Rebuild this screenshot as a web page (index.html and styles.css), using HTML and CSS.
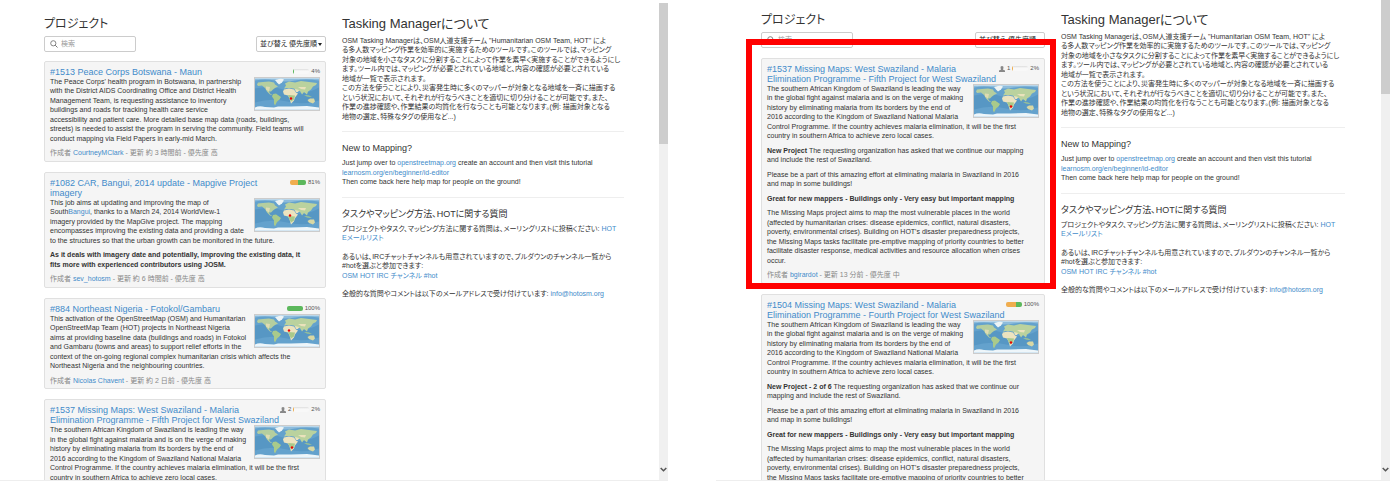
FILE: index.html
```
<!DOCTYPE html>
<html lang="ja">
<head>
<meta charset="utf-8">
<title>Tasking Manager</title>
<link rel="stylesheet" href="styles.css">
</head>
<body>
<svg class="defs" aria-hidden="true">
  <symbol id="world" viewBox="0 0 64 31">
    <rect width="64" height="31" fill="#64a2cd"/>
    <path d="M0 10Q16 6 32 12T64 9V22Q48 27 32 23T0 24Z" fill="#5797c4"/>
    <path d="M0 0H64V2Q50 0 40 2T20 2 0 2Z" fill="#8dbcdc"/>
    <path d="M2 6L3 4 8 3.500 14 3 19 4 20 6 23 8 20 9.500 18 11 16 13 14 13 15 15 18 17 15 16 12 13 10 9.500 7 7 3 7.500Z" fill="#b5ce9f"/>
    <path d="M11 8L15 8.500 14 13 11 11Z" fill="#dfdcb2"/>
    <path d="M20 1.500L26 0 29 1 27 4 24 6 22 4Z" fill="#eef4f5"/>
    <path d="M18 15.500L21 15 26 18.500 24.500 21 22 23 20 27 19 25 19 21 17 18Z" fill="#a9ca8b"/>
    <path d="M29 10L31 7 30 5 34 3 40 4 46 2.500 54 3.500 62 4.500 61 6.500 58 8 56 11 53 13 52 16 49 13.500 47 16 45 12.500 41 12.500 39 10 35 9.500 32 9.500Z" fill="#bad29e"/>
    <path d="M29 11L34 10 39 11 41 14 43 15 40 19 39 22 36 25 34.500 20 33 17 29 16 28 13Z" fill="#ece3bf"/>
    <path d="M33 16.500L40 17 39 21 36 23 34.500 20Z" fill="#a9c98a"/>
    <path d="M40 10.500L44 11.500 43 13.500 41 13.500Z M43 8.500L51 8.500 50 11 46 10.500Z" fill="#ebe2bc"/>
    <path d="M49 16.500L52 18 57 18.500 54 17Z" fill="#a9ca8b"/>
    <path d="M52.500 21.500L55 20 59 20 60 23 58 25 54 23.500Z" fill="#d9d8a4"/>
    <path d="M0 29Q4 27 10 28.500L19 29 23 28 36 28 52 27.500 64 29V31H0Z" fill="#eef6fa"/>
  </symbol>
  <symbol id="person" viewBox="0 0 6 6"><path d="M3 0Q4.800 0 4.500 2L3.900 3.400 6 4.500V6H0V4.500L2.100 3.400 1.500 2Q1.200 0 3 0Z" fill="#888"/></symbol>
  <symbol id="lens" viewBox="0 0 8 8"><circle cx="3.300" cy="3.300" r="2.600" fill="none" stroke="#777" stroke-width=".9"/><path d="M5.200 5.200L7.500 7.500" stroke="#777"/></symbol>
  <symbol id="down" viewBox="0 0 7 5"><path d="M.7 1L3.500 3.800 6.300 1" fill="none" stroke="#555" stroke-width="1.500"/></symbol>
</svg>
<main class="screens">
<div class="screen first">
  <div class="columns">
    <section>
      <h1 class="heading">プロジェクト</h1>
      <form class="tools">
        <label class="search"><svg><use href="#lens"/></svg><input type="text" placeholder="検索" aria-label="検索"></label>
        <button type="button" class="sort">並び替え 優先度順<i class="caret"></i></button>
      </form>
      <article class="card">
        <div class="status"><span class="bar"><i class="done" style="width:6%"></i></span>4%</div>
        <h2><a href="#">#1513 Peace Corps Botswana - Maun</a></h2>
        <svg class="map" viewBox="0 0 64 31"><use href="#world"/><circle cx="36" cy="20" r="1.200" fill="#e00"/></svg>
        <p>The Peace Corps' health program in Botswana, in partnership<br>with the District AIDS Coordinating Office and District Health<br>Management Team, is requesting assistance to inventory<br>buildings and roads for tracking health care service<br>accessibility and patient care. More detailed base map data (roads, buildings,<br>streets) is needed to assist the program in serving the community. Field teams will<br>conduct mapping via Field Papers in early-mid March.</p>
        <footer>作成者 <a href="#">CourtneyMClark</a> - 更新 約 3 時間前 - 優先度 高</footer>
      </article>
      <article class="card">
        <div class="status"><span class="bar"><i class="half" style="width:50%"></i><i class="done" style="width:50%"></i></span>81%</div>
        <h2><a href="#">#1082 CAR, Bangui, 2014 update - Mapgive Project<br>imagery</a></h2>
        <svg class="map" viewBox="0 0 64 31"><use href="#world"/><circle cx="35" cy="16" r="1.200" fill="#e00"/></svg>
        <p>This job aims at updating and improving the map of<br>South<a href="#">Bangui</a>, thanks to a March 24, 2014 WorldView-1<br>imagery provided by the MapGive project. The mapping<br>encompasses improving the existing data and providing a date<br>to the structures so that the urban growth can be monitored in the future.</p>
        <p><b>As it deals with imagery date and potentially, improving the existing data, it<br>fits more with experienced contributors using JOSM.</b></p>
        <footer>作成者 <a href="#">sev_hotosm</a> - 更新 約 6 時間前 - 優先度 高</footer>
      </article>
      <article class="card">
        <div class="status"><span class="bar"><i class="done" style="width:100%"></i></span>100%</div>
        <h2><a href="#">#884 Northeast Nigeria - Fotokol/Gambaru</a></h2>
        <svg class="map" viewBox="0 0 64 31"><use href="#world"/><circle cx="34" cy="15" r="1.200" fill="#e00"/></svg>
        <p>This activation of the OpenStreetMap (OSM) and Humanitarian<br>OpenStreetMap Team (HOT) projects in Northeast Nigeria<br>aims at providing baseline data (buildings and roads) in Fotokol<br>and Gambaru (towns and areas) to support relief efforts in the<br>context of the on-going regional complex humanitarian crisis which affects the<br>Northeast Nigeria and the neighbouring countries.</p>
        <footer>作成者 <a href="#">Nicolas Chavent</a> - 更新 約 2 日前 - 優先度 高</footer>
      </article>
      <article class="card">
        <div class="status"><svg><use href="#person"/></svg>2<span class="bar"><i class="half" style="width:6%"></i></span>2%</div>
        <h2><a href="#">#1537 Missing Maps: West Swaziland - Malaria<br>Elimination Programme - Fifth Project for West Swaziland</a></h2>
        <svg class="map" viewBox="0 0 64 31"><use href="#world"/><circle cx="37" cy="21" r="1.200" fill="#e00"/></svg>
        <p>The southern African Kingdom of Swaziland is leading the way<br>in the global fight against malaria and is on the verge of making<br>history by eliminating malaria from its borders by the end of<br>2016 according to the Kingdom of Swaziland National Malaria<br>Control Programme. If the country achieves malaria elimination, it will be the first<br>country in southern Africa to achieve zero local cases.</p>
      </article>
    </section>
    <section class="about">
      <h1 class="heading">Tasking Managerについて</h1>
      <p>OSM Tasking Managerは、OSM人道支援チーム "Humanitarian OSM Team, HOT" によ<br>る多人数マッピング作業を効率的に実施するためのツールです。このツールでは、マッピング<br>対象の地域を小さなタスクに分割することによって作業を素早く実施することができるようにし<br>ます。ツール内では、マッピングが必要とされている地域と、内容の確認が必要とされている<br>地域が一覧で表示されます。<br>この方法を使うことにより、災害発生時に多くのマッパーが対象となる地域を一斉に描画する<br>という状況において、それぞれが行なうべきことを適切に切り分けることが可能です。また、<br>作業の進捗確認や、作業結果の均質化を行なうことも可能となります。(例: 描画対象となる<br>地物の選定、特殊なタグの使用など...)</p>
      <hr>
      <h2>New to Mapping?</h2>
      <p>Just jump over to <a href="#">openstreetmap.org</a> create an account and then visit this tutorial<br><a href="#">learnosm.org/en/beginner/id-editor</a><br>Then come back here help map for people on the ground!</p>
      <hr>
      <h2>タスクやマッピング方法、HOTに関する質問</h2>
      <p>プロジェクトやタスク、マッピング方法に関する質問は、メーリングリストに投稿ください: <a href="#">HOT<br>Eメールリスト</a></p>
      <p>あるいは、IRCチャットチャンネルも用意されていますので、プルダウンのチャンネル一覧から<br>#hotを選ぶと参加できます:<br><a href="#">OSM HOT IRC チャンネル #hot</a></p>
      <p>全般的な質問やコメントは以下のメールアドレスで受け付けています: <a href="#">info@hotosm.org</a></p>
    </section>
  </div>
  <div class="scroll"><div class="thumb"></div><svg><use href="#down"/></svg></div>
</div>
<div class="screen second">
  <div class="columns">
    <section>
      <h1 class="heading">プロジェクト</h1>
      <form class="tools">
        <label class="search"><svg><use href="#lens"/></svg><input type="text" placeholder="検索" aria-label="検索"></label>
        <button type="button" class="sort">並び替え 優先度順<i class="caret"></i></button>
      </form>
      <article class="card marked">
        <div class="status"><svg><use href="#person"/></svg>1<span class="bar"><i class="half" style="width:6%"></i></span>2%</div>
        <h2><a href="#">#1537 Missing Maps: West Swaziland - Malaria<br>Elimination Programme - Fifth Project for West Swaziland</a></h2>
        <svg class="map" viewBox="0 0 64 31"><use href="#world"/><circle cx="37" cy="21" r="1.200" fill="#e00"/></svg>
        <p>The southern African Kingdom of Swaziland is leading the way<br>in the global fight against malaria and is on the verge of making<br>history by eliminating malaria from its borders by the end of<br>2016 according to the Kingdom of Swaziland National Malaria<br>Control Programme. If the country achieves malaria elimination, it will be the first<br>country in southern Africa to achieve zero local cases.</p>
        <p><b>New Project</b> The requesting organization has asked that we continue our mapping<br>and include the rest of Swaziland.</p>
        <p>Please be a part of this amazing effort at eliminating malaria in Swaziland in 2016<br>and map in some buildings!</p>
        <p><b>Great for new mappers - Buildings only - Very easy but important mapping</b></p>
        <p>The Missing Maps project aims to map the most vulnerable places in the world<br>(affected by humanitarian crises: disease epidemics, conflict, natural disasters,<br>poverty, environmental crises). Building on HOT's disaster preparedness projects,<br>the Missing Maps tasks facilitate pre-emptive mapping of priority countries to better<br>facilitate disaster response, medical activities and resource allocation when crises<br>occur.</p>
        <footer>作成者 <a href="#">bgirardot</a> - 更新 13 分前 - 優先度 中</footer>
      </article>
      <article class="card">
        <div class="status"><span class="bar"><i class="half" style="width:62%"></i><i class="done" style="width:38%"></i></span>100%</div>
        <h2><a href="#">#1504 Missing Maps: West Swaziland - Malaria<br>Elimination Programme - Fourth Project for West Swaziland</a></h2>
        <svg class="map" viewBox="0 0 64 31"><use href="#world"/><circle cx="37" cy="21" r="1.200" fill="#e00"/></svg>
        <p>The southern African Kingdom of Swaziland is leading the way<br>in the global fight against malaria and is on the verge of making<br>history by eliminating malaria from its borders by the end of<br>2016 according to the Kingdom of Swaziland National Malaria<br>Control Programme. If the country achieves malaria elimination, it will be the first<br>country in southern Africa to achieve zero local cases.</p>
        <p><b>New Project - 2 of 6</b> The requesting organization has asked that we continue our<br>mapping and include the rest of Swaziland.</p>
        <p>Please be a part of this amazing effort at eliminating malaria in Swaziland in 2016<br>and map in some buildings!</p>
        <p><b>Great for new mappers - Buildings only - Very easy but important mapping</b></p>
        <p>The Missing Maps project aims to map the most vulnerable places in the world<br>(affected by humanitarian crises: disease epidemics, conflict, natural disasters,<br>poverty, environmental crises). Building on HOT's disaster preparedness projects,<br>the Missing Maps tasks facilitate pre-emptive mapping of priority countries to better</p>
      </article>
    </section>
    <section class="about">
      <h1 class="heading">Tasking Managerについて</h1>
      <p>OSM Tasking Managerは、OSM人道支援チーム "Humanitarian OSM Team, HOT" によ<br>る多人数マッピング作業を効率的に実施するためのツールです。このツールでは、マッピング<br>対象の地域を小さなタスクに分割することによって作業を素早く実施することができるようにし<br>ます。ツール内では、マッピングが必要とされている地域と、内容の確認が必要とされている<br>地域が一覧で表示されます。<br>この方法を使うことにより、災害発生時に多くのマッパーが対象となる地域を一斉に描画する<br>という状況において、それぞれが行なうべきことを適切に切り分けることが可能です。また、<br>作業の進捗確認や、作業結果の均質化を行なうことも可能となります。(例: 描画対象となる<br>地物の選定、特殊なタグの使用など...)</p>
      <hr>
      <h2>New to Mapping?</h2>
      <p>Just jump over to <a href="#">openstreetmap.org</a> create an account and then visit this tutorial<br><a href="#">learnosm.org/en/beginner/id-editor</a><br>Then come back here help map for people on the ground!</p>
      <hr>
      <h2>タスクやマッピング方法、HOTに関する質問</h2>
      <p>プロジェクトやタスク、マッピング方法に関する質問は、メーリングリストに投稿ください: <a href="#">HOT<br>Eメールリスト</a></p>
      <p>あるいは、IRCチャットチャンネルも用意されていますので、プルダウンのチャンネル一覧から<br>#hotを選ぶと参加できます:<br><a href="#">OSM HOT IRC チャンネル #hot</a></p>
      <p>全般的な質問やコメントは以下のメールアドレスで受け付けています: <a href="#">info@hotosm.org</a></p>
    </section>
  </div>
  <div class="scroll"><div class="thumb"></div><svg><use href="#down"/></svg></div>
</div>
</main>
</body>
</html>
```
FILE: styles.css
```
* { box-sizing: border-box; }
body {
  margin: 0;
  background: #fff;
  color: #333;
  font-family: "Liberation Sans", "Noto Sans CJK JP", sans-serif;
  font-size: 7px;
  line-height: 1.355;
  font-feature-settings: "palt";
}
a { color: #428bca; text-decoration: none; }
h1, h2, p { margin: 0; font-weight: 400; }
.defs { position: absolute; width: 0; height: 0; }
.screens {
  display: grid;
  grid-template-columns: 668fr 674fr;
  gap: 48px;
  height: 100vh;
  overflow: hidden;
}
.screen {
  display: flex;
  min-width: 0;
  min-height: 0;
  overflow: hidden;
  border-bottom: 1px solid #eee;
}
.first { padding-top: 3px; }
.columns {
  flex: 1;
  min-width: 0;
  display: grid;
  grid-template-columns: 1fr 1fr;
  gap: 16px;
  padding: 13px 35px 0 44px;
}
.second .columns { padding: 12px 36px 0 45px; }
.columns > section { min-width: 0; white-space: nowrap; }
.heading { font-size: 12px; line-height: 16px; }
.about .heading { font-size: 13px; }
.tools { display: flex; justify-content: space-between; margin: 4px 0 9px; }
.second .tools { margin-bottom: 10px; }
.search {
  display: flex;
  align-items: center;
  gap: 3px;
  width: 92px;
  height: 16px;
  padding: 0 5px;
  border: 1px solid #ccc;
  border-radius: 2px;
}
.search svg { width: 8px; height: 8px; flex: none; }
.search input {
  width: 100%;
  min-width: 0;
  padding: 0;
  border: 0;
  outline: 0;
  background: none;
  font: inherit;
}
.search input::placeholder { color: #999; }
.sort {
  display: flex;
  align-items: center;
  gap: 1px;
  height: 16px;
  padding: 0 3px;
  border: 1px solid #ccc;
  border-radius: 2px;
  background: #fff;
  color: #222;
  font: inherit;
}
.caret { border: 2px solid transparent; border-top: 3px solid #222; border-bottom: 0; }
.card {
  position: relative;
  margin-bottom: 10px;
  padding: 5px 5px 3px;
  border: 1px solid #e0e0e0;
  border-radius: 2px;
  background: #f5f5f5;
}
.card h2 { font-size: 9px; line-height: 10px; }
.card p { margin-bottom: 5px; }
.card footer { color: #888; }
.status {
  float: right;
  display: flex;
  align-items: center;
  gap: 2px;
  font-size: 6px;
  line-height: 9px;
  color: #555;
}
.status svg { width: 6px; height: 6px; }
.bar {
  display: flex;
  width: 16px;
  height: 5px;
  overflow: hidden;
  border-radius: 2px;
  background: linear-gradient(#ddd, #f8f8f8 2px);
}
.done { background: #5cb85c; }
.half { background: #f0ad4e; }
.map {
  float: right;
  width: 66px;
  height: 34px;
  margin: 0 0 2px 2px;
  border: 1px solid #ccc;
  background: #eef6fa;
}
.marked::after {
  content: "";
  position: absolute;
  inset: -20px -12px -6px -16px;
  border: 6px solid #f00;
}
.about .heading + p { margin-top: 4px; }
.about hr { margin: 10px 0; border: 0; border-top: 1px solid #eee; }
.about h2 { margin-bottom: 4px; font-size: 9px; line-height: 12px; }
.about p + p { margin-top: 9px; }
.scroll {
  flex: none;
  display: flex;
  flex-direction: column;
  justify-content: space-between;
  align-items: center;
  width: 9px;
  padding-bottom: 8px;
  background: #f0f0f0;
}
.thumb { width: 100%; height: 30%; background: #cdcdcd; }
.second .thumb { height: 20%; }
.scroll svg { width: 7px; height: 5px; }
```
